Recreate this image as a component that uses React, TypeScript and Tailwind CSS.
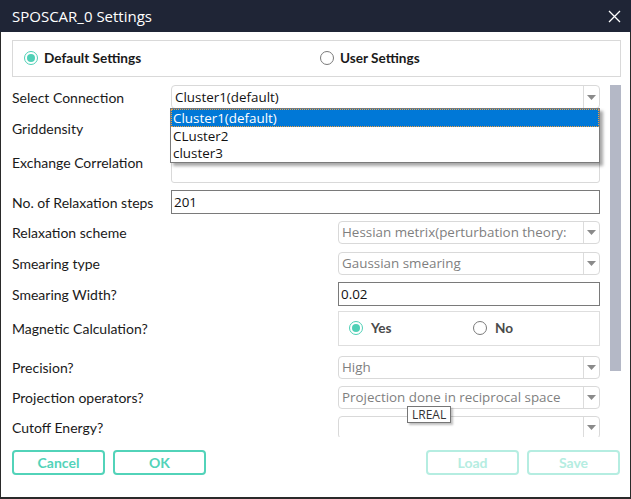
import React from "react";

const labelFont = { fontFamily: "Lato, 'Open Sans', sans-serif" };
const fieldFont = { fontFamily: "'Open Sans', sans-serif" };

function Arrow() {
  return (
    <div className="flex h-full w-[16px] items-center justify-center border-l border-[#dcdcdc]">
      <svg width="9" height="5" viewBox="0 0 9 5">
        <path d="M0 0 L9 0 L4.5 5 Z" fill="#8a8a8a" />
      </svg>
    </div>
  );
}

function Select({ value, disabled, className = "" }: { value: string; disabled?: boolean; className?: string }) {
  return (
    <div className={`flex h-[23px] items-center rounded-[4px] border border-[#d9d9d9] bg-white ${className}`}>
      <div
        className={`flex-1 truncate pl-[3px] text-[13.4px] ${disabled ? "text-[#7f7f7f]" : "text-[#111]"}`}
        style={fieldFont}
      >
        {value}
      </div>
      <Arrow />
    </div>
  );
}

function Input({ value, className = "" }: { value: string; className?: string }) {
  return (
    <div
      className={`flex h-[24px] items-center border border-[#7a7a7a] bg-white pl-[2px] text-[13.4px] text-[#111] ${className}`}
      style={fieldFont}
    >
      {value}
    </div>
  );
}

function Radio({ checked }: { checked?: boolean }) {
  return (
    <div
      className={`flex h-[14px] w-[14px] items-center justify-center rounded-full border ${
        checked ? "border-[#4fd0b6]" : "border-[#7a7a7a]"
      } bg-white`}
    >
      {checked && <div className="h-[8px] w-[8px] rounded-full bg-[#4fd0b6]" />}
    </div>
  );
}

function Row({
  label,
  children,
  h,
  mt,
  labelShift = 0,
}: {
  label: string;
  children: React.ReactNode;
  h: number;
  mt: number;
  labelShift?: number;
}) {
  return (
    <div className="flex shrink-0 items-center" style={{ height: h, marginTop: mt }}>
      <div
        className="w-[159px] shrink-0 whitespace-nowrap text-[14px] text-[#1a1a1a]"
        style={{ ...labelFont, marginTop: labelShift }}
      >
        {label}
      </div>
      <div className="flex flex-1 justify-end">{children}</div>
    </div>
  );
}

export default function App() {
  return (
    <div className="relative h-[499px] w-[631px] overflow-hidden bg-white">
      <div className="flex h-[499px] w-[631px] flex-col border-x border-b-2 border-[#2a2a2a]">
        {/* title bar */}
        <div className="-mx-px flex h-[32px] shrink-0 items-center justify-between bg-[#1f2536] pl-[12px] pr-[10px]">
          <div className="text-[15px] text-white" style={fieldFont}>
            SPOSCAR_0 Settings
          </div>
          <svg width="13" height="13" viewBox="0 0 13 13">
            <path d="M1 1 L12 12 M12 1 L1 12" stroke="#fff" strokeWidth="1.3" />
          </svg>
        </div>

        {/* radio box */}
        <div className="ml-[11px] mt-[8px] flex h-[37px] w-[609px] shrink-0 items-center border border-[#d9d9d9] pl-[11px]">
          <div className="flex w-[296px] items-center gap-[6px]">
            <Radio checked />
            <span className="text-[13.6px] font-bold text-[#1a1a1a]" style={labelFont}>
              Default Settings
            </span>
          </div>
          <div className="flex items-center gap-[6px]">
            <Radio />
            <span className="text-[13.6px] font-bold text-[#1a1a1a]" style={labelFont}>
              User Settings
            </span>
          </div>
        </div>

        {/* scroll area */}
        <div className="flex h-[360px] shrink-0 overflow-hidden pl-[11px]">
          <div className="flex w-[588px] flex-col">
            <Row label="Select Connection" h={24} mt={8}>
              <Select value="Cluster1(default)" className="h-[24px] w-[429px]" />
            </Row>
            <Row label="Griddensity" h={24} mt={7}>
              <Select value="" className="h-[24px] w-[429px]" />
            </Row>
            <Row label="Exchange Correlation" h={36} mt={7} labelShift={-6}>
              <div className="h-[36px] w-[429px] rounded-[3px] border border-[#d9d9d9]" />
            </Row>
            <Row label="No. of Relaxation steps" h={24} mt={7}>
              <Input value="201" className="w-[429px]" />
            </Row>
            <Row label="Relaxation scheme" h={23} mt={7}>
              <Select value="Hessian metrix(perturbation theory:" disabled className="w-[262px]" />
            </Row>
            <Row label="Smearing type" h={23} mt={8}>
              <Select value="Gaussian smearing" disabled className="w-[262px]" />
            </Row>
            <Row label="Smearing Width?" h={24} mt={7}>
              <Input value="0.02" className="w-[262px]" />
            </Row>
            <Row label="Magnetic Calculation?" h={35} mt={5}>
              <div className="flex h-[35px] w-[262px] items-center border border-[#dedede] pl-[10px]">
                <div className="flex w-[124px] items-center gap-[8px]">
                  <Radio checked />
                  <span className="text-[13.6px] font-bold text-[#4a4a4a]" style={labelFont}>
                    Yes
                  </span>
                </div>
                <div className="flex items-center gap-[8px]">
                  <Radio />
                  <span className="text-[13.6px] font-bold text-[#4a4a4a]" style={labelFont}>
                    No
                  </span>
                </div>
              </div>
            </Row>
            <Row label="Precision?" h={23} mt={10}>
              <Select value="High" disabled className="w-[262px]" />
            </Row>
            <Row label="Projection operators?" h={23} mt={7}>
              <Select value="Projection done in reciprocal space" disabled className="w-[262px]" />
            </Row>
            <Row label="Cutoff Energy?" h={23} mt={7}>
              <Select value="" disabled className="w-[262px]" />
            </Row>
          </div>
          <div className="ml-[10px] mt-[8px] h-[286px] w-[11px] shrink-0 bg-[#b4b8c6]" />
        </div>

        {/* buttons */}
        <div className="mt-[13px] flex h-[25px] shrink-0 items-center pl-[11px] pr-[10px]">
          <div className="flex gap-[8px]">
            <button className="h-[25px] w-[93px] rounded-[4px] border-2 border-[#52d3b9] text-[14px] font-bold text-[#52d3b9]" style={labelFont}>
              Cancel
            </button>
            <button className="h-[25px] w-[93px] rounded-[4px] border-2 border-[#52d3b9] text-[14px] font-bold text-[#52d3b9]" style={labelFont}>
              OK
            </button>
          </div>
          <div className="ml-auto flex gap-[8px]">
            <button className="h-[25px] w-[93px] rounded-[4px] border-2 border-[#b5ede1] text-[14px] font-bold text-[#b5ede1]" style={labelFont}>
              Load
            </button>
            <button className="h-[25px] w-[93px] rounded-[4px] border-2 border-[#b5ede1] text-[14px] font-bold text-[#b5ede1]" style={labelFont}>
              Save
            </button>
          </div>
        </div>
      </div>

      {/* dropdown list */}
      <div
        className="absolute left-[170px] top-[108px] w-[430px] border border-[#7a7a7a] bg-white shadow-[3px_3px_3px_rgba(0,0,0,0.35)]"
        style={fieldFont}
      >
        <div className="h-[18px] border border-dotted border-[#f0a040] bg-[#0078d7] pl-[1px] text-[13.4px] leading-[16px] text-white">
          Cluster1(default)
        </div>
        <div className="h-[18px] pl-[2px] text-[13.4px] leading-[18px] text-[#111]">CLuster2</div>
        <div className="h-[17px] pl-[2px] text-[13.4px] leading-[17px] text-[#111]">cluster3</div>
      </div>

      {/* tooltip */}
      <div
        className="absolute left-[407px] top-[406px] border border-[#767676] bg-white px-[4px] text-[12px] leading-[15px] text-[#333] shadow-[2px_2px_2px_rgba(0,0,0,0.25)]"
        style={fieldFont}
      >
        LREAL
      </div>
    </div>
  );
}
